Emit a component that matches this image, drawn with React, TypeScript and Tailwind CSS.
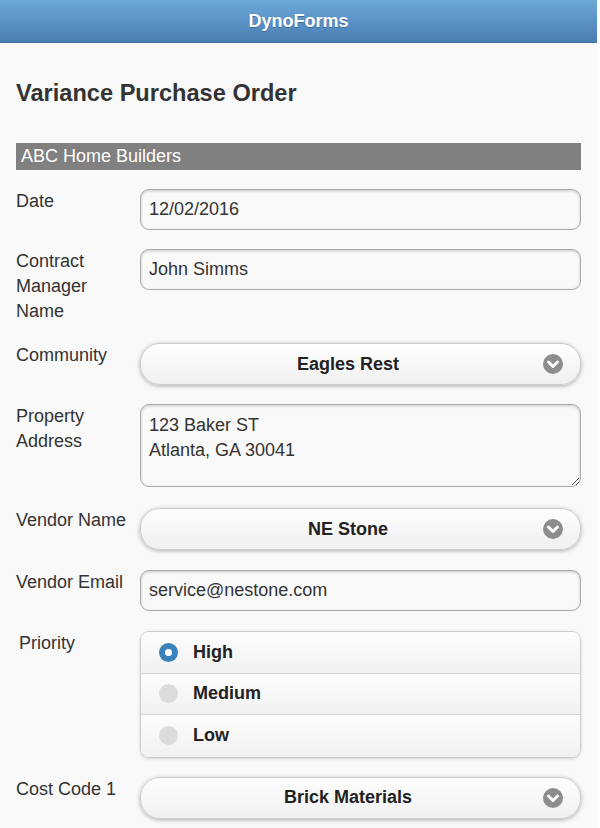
import type { ReactNode } from "react";

const font = { fontFamily: '"Liberation Sans", Arial, sans-serif' };

function Row({ label, children, labelClass = "", className = "" }: { label: string; children: ReactNode; labelClass?: string; className?: string }) {
  return (
    <div className={"flex items-start " + className}>
      <div className={"w-[124px] shrink-0 pr-2 text-[18px] leading-[25px] text-[#333] " + labelClass}>{label}</div>
      <div className="flex-1">{children}</div>
    </div>
  );
}

function TextInput({ value }: { value: string }) {
  return (
    <input
      readOnly
      value={value}
      className="block h-[41px] w-full rounded-[9px] border border-[#aaa] bg-[#f9f9f9] px-2 text-[18px] text-[#333] shadow-[inset_0_1px_3px_rgba(0,0,0,0.2)] outline-none"
      style={font}
    />
  );
}

function Chevron() {
  return (
    <svg width="20" height="20" viewBox="0 0 20 20">
      <circle cx="10" cy="10" r="10" fill="#8d8d8d" />
      <polyline points="5.5,8 10,12.5 14.5,8" fill="none" stroke="#fff" strokeWidth="3" strokeLinecap="round" strokeLinejoin="round" />
    </svg>
  );
}

function Select({ value }: { value: string }) {
  return (
    <div className="relative flex h-[42px] w-full items-center rounded-[20px] border border-[#ccc] bg-gradient-to-b from-[#fefefe] to-[#f0f0f0] pl-[15px] pr-[40px] shadow-[0_1px_4px_rgba(0,0,0,0.3)]">
      <span className="flex-1 text-center text-[18px] font-bold text-[#222]">{value}</span>
      <span className="absolute right-[17px] top-[10px]">
        <Chevron />
      </span>
    </div>
  );
}

function Radio({ label, checked, last }: { label: string; checked?: boolean; last?: boolean }) {
  return (
    <div className={"flex h-[41.5px] items-center bg-gradient-to-b from-[#fdfdfd] to-[#f1f1f1] pl-[18px]" + (last ? "" : " border-b border-[#d4d4d4]")}>
      {checked ? (
        <span className="flex h-[19px] w-[19px] items-center justify-center rounded-full bg-[#3a82b9]">
          <span className="h-[7px] w-[7px] rounded-full bg-white" />
        </span>
      ) : (
        <span className="h-[19px] w-[19px] rounded-full bg-[#dcdcdc]" />
      )}
      <span className="ml-[15px] text-[18px] font-bold text-[#222]">{label}</span>
    </div>
  );
}

export default function App() {
  return (
    <div className="min-h-[828px] w-[600px] bg-white" style={font}>
      <div className="w-[597px] bg-[#f9f9f9] min-h-[828px]">
        <header className="flex h-[43px] items-center justify-center border-b border-[#456f9a] bg-gradient-to-b from-[#6da9d9] to-[#4a7db3]">
          <h1 className="text-[18px] font-bold text-white [text-shadow:0_1px_0_#3e6a95]">DynoForms</h1>
        </header>

        <div className="px-[16px] pt-[36px]">
          <h2 className="text-[23.6px] font-bold leading-[28px] text-[#333]">Variance Purchase Order</h2>

          <div className="mt-[36px] flex h-[27px] w-[565px] items-center bg-[#808080] pl-[5px] text-[18px] text-white">
            ABC Home Builders
          </div>

          <div className="mt-[19px] flex w-[565px] flex-col gap-[19px]">
            <Row label="Date">
              <TextInput value="12/02/2016" />
            </Row>
            <Row label="Contract Manager Name">
              <TextInput value="John Simms" />
            </Row>
            <Row label="Community">
              <Select value="Eagles Rest" />
            </Row>
            <Row label="Property Address">
              <textarea
                readOnly
                value={"123 Baker ST\nAtlanta, GA 30041"}
                className="block h-[83px] w-full rounded-[9px] border border-[#aaa] bg-[#f9f9f9] px-2 py-[8px] text-[18px] leading-[25px] text-[#333] shadow-[inset_0_1px_3px_rgba(0,0,0,0.2)] outline-none"
                style={font}
              />
            </Row>
            <Row label="Vendor Name" className="mt-[2px]">
              <Select value="NE Stone" />
            </Row>
            <Row label="Vendor Email" className="mt-[1px]">
              <TextInput value="service@nestone.com" />
            </Row>
            <Row label="Priority" labelClass="pl-[3px]" className="mt-[1px]">
              <div className="overflow-hidden rounded-[9px] border border-[#ccc] shadow-[0_1px_3px_rgba(0,0,0,0.15)]">
                <Radio label="High" checked />
                <Radio label="Medium" />
                <Radio label="Low" last />
              </div>
            </Row>
            <Row label="Cost Code 1">
              <Select value="Brick Materials" />
            </Row>
          </div>
        </div>
      </div>
    </div>
  );
}
